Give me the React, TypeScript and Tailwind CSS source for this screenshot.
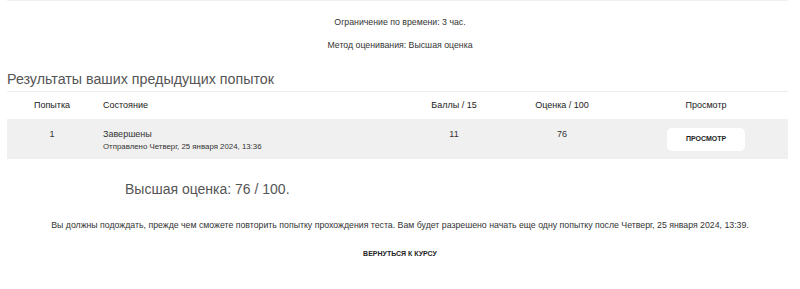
import React from "react";

export default function App() {
  return (
    <div
      className="w-[800px] h-[289px] bg-white text-[#333] overflow-hidden"
      style={{ fontFamily: '"Liberation Sans", Arial, sans-serif' }}
    >
      <div className="ml-[7px] w-[781px] border-t border-[#f0f0f0]" />
      <div className="pt-[14px] flex flex-col items-center text-[8.75px] leading-[14px] text-[#333]">
        <div>Ограничение по времени: 3 час.</div>
        <div className="mt-[9px]">Метод оценивания: Высшая оценка</div>
      </div>
      <div className="ml-[7px] w-[781px] mt-[17px]">
        <h2 className="text-[14.25px] leading-[20px] text-[#555] pb-[2px] border-b border-[#eeeeee]">
          Результаты ваших предыдущих попыток
        </h2>
        <div className="grid grid-cols-[90px_303px_108px_108px_172px] text-[9px] text-[#333]">
          <div className="h-[27px] flex items-center justify-center text-[#1a1a1a]">Попытка</div>
          <div className="h-[27px] flex items-center pl-[6px] text-[#1a1a1a]">Состояние</div>
          <div className="h-[27px] flex items-center justify-center text-[#1a1a1a]">Баллы / 15</div>
          <div className="h-[27px] flex items-center justify-center text-[#1a1a1a]">Оценка / 100</div>
          <div className="h-[27px] flex items-center justify-center pl-[8px] text-[#1a1a1a]">Просмотр</div>

          <div className="h-[40px] bg-[#f0f0f0] pt-[10px] text-center leading-[11px]">1</div>
          <div className="h-[40px] bg-[#f0f0f0] pt-[10px] pl-[6px]">
            <div className="leading-[11px]">Завершены</div>
            <div className="text-[7.85px] leading-[11px] mt-[1px]">Отправлено Четверг, 25 января 2024, 13:36</div>
          </div>
          <div className="h-[40px] bg-[#f0f0f0] pt-[10px] text-center leading-[11px]">11</div>
          <div className="h-[40px] bg-[#f0f0f0] pt-[10px] text-center leading-[11px]">76</div>
          <div className="h-[40px] bg-[#f0f0f0] flex items-center justify-center pl-[8px]">
            <div className="w-[78px] h-[23px] bg-white rounded-[5px] flex items-center justify-center text-[7px] font-bold text-[#222]">
              ПРОСМОТР
            </div>
          </div>
        </div>
      </div>
      <div className="pl-[125px] mt-[21px] text-[14px] leading-[18px] text-[#555]">
        Высшая оценка: 76 / 100.
      </div>
      <div className="mt-[21px] text-center text-[8.75px] leading-[12px] text-[#333]">
        Вы должны подождать, прежде чем сможете повторить попытку прохождения теста. Вам будет разрешено начать еще одну попытку после Четверг, 25 января 2024, 13:39.
      </div>
      <div className="mt-[18px] text-center text-[7px] leading-[10px] font-bold text-[#222]">
        ВЕРНУТЬСЯ К КУРСУ
      </div>
    </div>
  );
}
